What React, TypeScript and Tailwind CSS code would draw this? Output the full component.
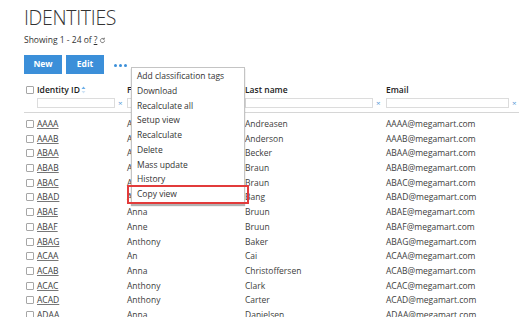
import React from "react";

const rows: [string, string, string][] = [
  ["AAAA", "Anders", "Andreasen"],
  ["AAAB", "Anna", "Anderson"],
  ["ABAA", "Alice", "Becker"],
  ["ABAB", "Adam", "Braun"],
  ["ABAC", "Albert", "Braun"],
  ["ABAD", "Amanda", "Bang"],
  ["ABAE", "Anna", "Bruun"],
  ["ABAF", "Anne", "Bruun"],
  ["ABAG", "Anthony", "Baker"],
  ["ACAA", "An", "Cai"],
  ["ACAB", "Anna", "Christoffersen"],
  ["ACAC", "Anthony", "Clark"],
  ["ACAD", "Anthony", "Carter"],
  ["ADAA", "Anna", "Danielsen"],
];

const menu = [
  "Add classification tags",
  "Download",
  "Recalculate all",
  "Setup view",
  "Recalculate",
  "Delete",
  "Mass update",
  "History",
  "Copy view",
];

function Box() {
  return <div className="ml-[2px] h-[8px] w-[8px] rounded-[1px] border border-[#a6a6a6] bg-white" />;
}

function Filter({ w }: { w: string }) {
  return (
    <div className="flex items-center">
      <div className={`${w} h-[10px] border border-[#dcdcdc] bg-white`} />
      <span className="ml-[3px] text-[8px] leading-none text-[#5a9ad8]">×</span>
    </div>
  );
}

const grid = "grid grid-cols-[13px_90px_118px_141px_140px]";

export default function App() {
  return (
    <div className="relative h-[317px] w-[519px] overflow-hidden bg-white font-['Open_Sans',sans-serif] text-[#404040]">
      <div className="pl-[24px]">
        <h1 className="pt-[8px] text-[19.5px] font-light leading-[20px] tracking-[-0.3px] text-[#333]">IDENTITIES</h1>
        <div className="mt-[6px] flex items-center text-[8.5px] leading-[12px] text-[#333]">
          <span>Showing 1 - 24 of </span>
          <span className="ml-[2px] underline">?</span>
          <svg className="ml-[2px]" width="7" height="7" viewBox="0 0 10 10" fill="none" stroke="#666" strokeWidth="1.2">
            <path d="M8 5a3 3 0 1 1-1-2.2" />
            <path d="M7.6 1v2.2H5.4" />
          </svg>
        </div>
        <div className="mt-[9px] flex items-center gap-[4px]">
          <div className="flex h-[19px] w-[38px] items-center justify-center bg-[#3b8fd9] text-[8.5px] font-bold text-white">New</div>
          <div className="flex h-[19px] w-[38px] items-center justify-center bg-[#3b8fd9] text-[8.5px] font-bold text-white">Edit</div>
          <div className="ml-[6px] flex gap-[2px] pt-[1px]">
            <span className="h-[3px] w-[3px] rounded-full bg-[#3b8fd9]" />
            <span className="h-[3px] w-[3px] rounded-full bg-[#3b8fd9]" />
            <span className="h-[3px] w-[3px] rounded-full bg-[#3b8fd9]" />
          </div>
        </div>
      </div>

      <div className="ml-[24px] mt-[10px] w-[520px]">
        <div className={`${grid} h-[12px] items-center text-[8.5px] font-semibold leading-[12px] text-[#222]`}>
          <Box />
          <div className="flex items-center">
            <span>Identity ID</span>
            <svg className="ml-[1px]" width="5" height="8" viewBox="0 0 5 8">
              <path d="M2.5 0.5L4.5 3H0.5z" fill="#6aaee8" />
              <path d="M2.5 7.5L4.5 5H0.5z" fill="#cfe3f5" />
            </svg>
          </div>
          <div>First name</div>
          <div>Last name</div>
          <div>Email</div>
        </div>
        <div className={`${grid} mt-[2px] border-b border-[#d6d6d6] pb-[4px]`}>
          <div />
          <Filter w="w-[78px]" />
          <Filter w="w-[106px]" />
          <Filter w="w-[128px]" />
          <Filter w="w-[123px]" />
        </div>
        <div className="pt-[3.5px]">
          {rows.map(([id, first, last]) => (
            <div key={id} className={`${grid} h-[14.72px] items-center text-[8.5px] leading-[12px]`}>
              <Box />
              <span className="underline decoration-[#777]">{id}</span>
              <span>{first}</span>
              <span>{last}</span>
              <span>{id}@megamart.com</span>
            </div>
          ))}
        </div>
      </div>

      <div className="absolute left-[131px] top-[67px] w-[114px] border border-[#c4c4c4] bg-white py-[1px] shadow-[0_2px_1px_rgba(0,0,0,0.3)]">
        {menu.map((m) => (
          <div key={m} className="h-[14.75px] pl-[5px] text-[8.5px] leading-[14.75px] text-[#333]">
            {m}
          </div>
        ))}
      </div>

      <div className="absolute left-[127px] top-[185px] h-[19px] w-[122px] border-2 border-[#e23b3b]" />
    </div>
  );
}
